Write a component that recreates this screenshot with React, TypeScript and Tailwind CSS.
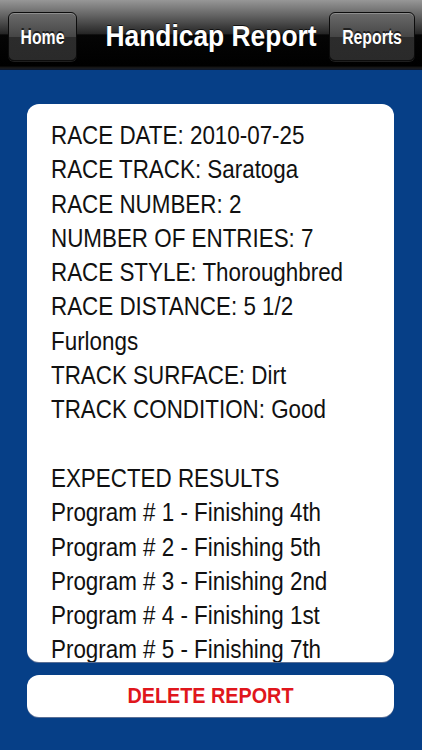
import React from "react";

const lines = [
  "RACE DATE: 2010-07-25",
  "RACE TRACK: Saratoga",
  "RACE NUMBER: 2",
  "NUMBER OF ENTRIES: 7",
  "RACE STYLE: Thoroughbred",
  "RACE DISTANCE: 5 1/2",
  "Furlongs",
  "TRACK SURFACE: Dirt",
  "TRACK CONDITION: Good",
  "",
  "EXPECTED RESULTS",
  "Program # 1 - Finishing 4th",
  "Program # 2 - Finishing 5th",
  "Program # 3 - Finishing 2nd",
  "Program # 4 - Finishing 1st",
  "Program # 5 - Finishing 7th",
];

function NavButton({ label, width }: { label: string; width: string }) {
  return (
    <div
      className={`${width} h-[49px] rounded-[6px] border border-[#0c0c0c] bg-[linear-gradient(to_bottom,#6a6a6a_0%,#464646_50%,#2c2c2c_52%,#2a2a2a_100%)] shadow-[inset_0_1px_0_rgba(255,255,255,0.25),0_1px_0_rgba(255,255,255,0.12)] flex items-center justify-center`}
    >
      <span className="text-white font-bold text-[15.8px] leading-none scale-y-[1.32] [text-shadow:0_-1px_0_rgba(0,0,0,0.6)]">
        {label}
      </span>
    </div>
  );
}

export default function App() {
  return (
    <div className="w-[422px] h-[750px] overflow-hidden flex flex-col bg-[#063f87] font-['Liberation_Sans',Arial,sans-serif]">
      <div className="h-[70px] shrink-0 grid grid-cols-[1fr_auto_1fr] items-center bg-[linear-gradient(to_bottom,#979797_0%,#5c5c5c_25%,#262626_48%,#050505_50%,#000000_94%,#1b1b1b_97%,#0a1730_100%)]">
        <div className="justify-self-start pl-[8px] pt-[3px]">
          <NavButton label="Home" width="w-[69px]" />
        </div>
        <div className="text-white font-bold text-[26.4px] leading-none scale-y-[1.15] [text-shadow:0_-1px_0_rgba(0,0,0,0.7)] pt-[2px]">
          Handicap Report
        </div>
        <div className="justify-self-end pr-[7px] pt-[3px]">
          <NavButton label="Reports" width="w-[86px]" />
        </div>
      </div>

      <div className="flex-1 flex flex-col pt-[34px] pl-[27px] pr-[28px]">
        <div className="h-[558px] bg-white rounded-[12px] overflow-hidden pt-[15px] pl-[24px] shadow-[0_1px_0_#5a6f95]">
          {lines.map((l, i) => (
            <div
              key={i}
              className="h-[34.3px] leading-[34.3px] text-[22.4px] text-[#111111] whitespace-nowrap scale-y-[1.185]"
            >
              {l}
            </div>
          ))}
        </div>
        <div className="mt-[13px] h-[42px] bg-white rounded-[12px] flex items-center justify-center shadow-[0_1px_0_#5a6f95]">
          <span className="text-[#e0161c] font-bold text-[19.8px] leading-none scale-y-[1.15]">
            DELETE REPORT
          </span>
        </div>
      </div>
    </div>
  );
}
